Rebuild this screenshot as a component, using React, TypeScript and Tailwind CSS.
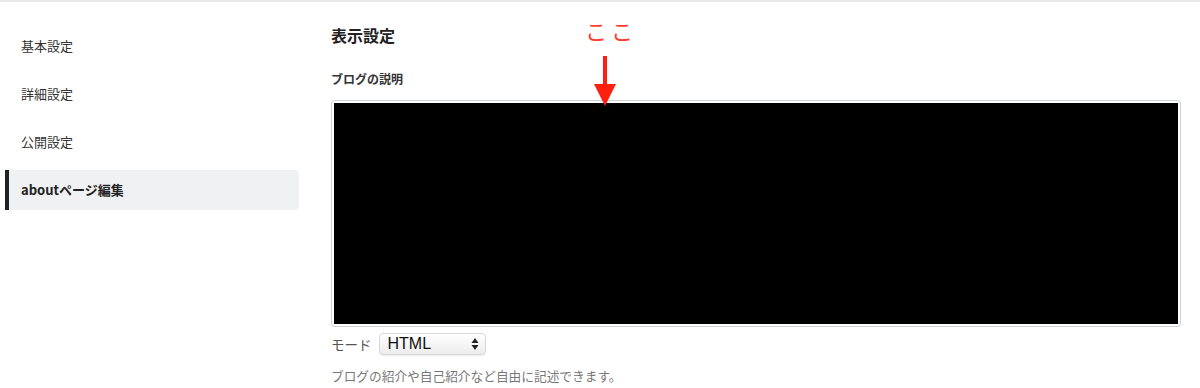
import React from "react";

const font = { fontFamily: '"Noto Sans CJK JP", "Liberation Sans", sans-serif' };

export default function App() {
  const items = ["基本設定", "詳細設定", "公開設定"];
  return (
    <div
      className="relative w-[1200px] h-[388px] overflow-hidden bg-white border-t-2 border-[#e8e8e8] flex text-[#333]"
      style={font}
    >
      <div className="w-[299px] pl-[5px] pt-[24px] flex flex-col gap-2">
        {items.map((t) => (
          <div key={t} className="h-10 flex items-center pl-4 text-[13px] text-[#333]">
            {t}
          </div>
        ))}
        <div className="h-10 flex items-center pl-[12px] text-[13px] font-bold text-[#222] bg-[#f0f1f3] border-l-4 border-[#222] rounded-r-[4px]">
          aboutページ編集
        </div>
      </div>
      <div className="flex-1 pl-[32px] pr-[19px] pt-[21px]">
        <div className="text-[16px] font-bold leading-[24px] text-[#222]">表示設定</div>
        <div className="mt-[24px] text-[12px] font-bold leading-[16px] text-[#333]">ブログの説明</div>
        <div className="mt-[13px] h-[227px] border border-[#cfd4d8] rounded-[3px] p-[2px]">
          <div className="w-full h-full bg-black"></div>
        </div>
        <div className="mt-[5px] flex items-center gap-[7px] h-[24px]">
          <span className="text-[13.5px] text-[#555]">モード</span>
          <div
            className="w-[107px] h-[22px] rounded-[4px] border border-[#d6d8da] bg-gradient-to-b from-white to-[#ececec] flex items-center justify-between pl-[8px] pr-[6px] shadow-[0_1px_1px_rgba(0,0,0,0.08)]"
            style={{ fontFamily: '"Liberation Sans", sans-serif' }}
          >
            <span className="text-[16px] text-[#111]">HTML</span>
            <svg width="8" height="14" viewBox="0 0 8 14">
              <path d="M4 1 L7.5 6 H0.5 Z" fill="#222" />
              <path d="M4 13 L7.5 8 H0.5 Z" fill="#222" />
            </svg>
          </div>
        </div>
        <div className="mt-[10px] text-[12.7px] text-[#777]">ブログの紹介や自己紹介など自由に記述できます。</div>
      </div>
      <div className="absolute left-[585px] top-[12px] text-[22px] leading-[32px] text-[#ff3b30] tracking-[4px]">ここ</div>
      <svg className="absolute left-[594px] top-[54px]" width="22" height="52" viewBox="0 0 22 52">
        <rect x="9" y="0" width="4" height="30" fill="#ff1f0f" />
        <path d="M0 28 H22 L11 50 Z" fill="#ff1f0f" />
      </svg>
    </div>
  );
}
